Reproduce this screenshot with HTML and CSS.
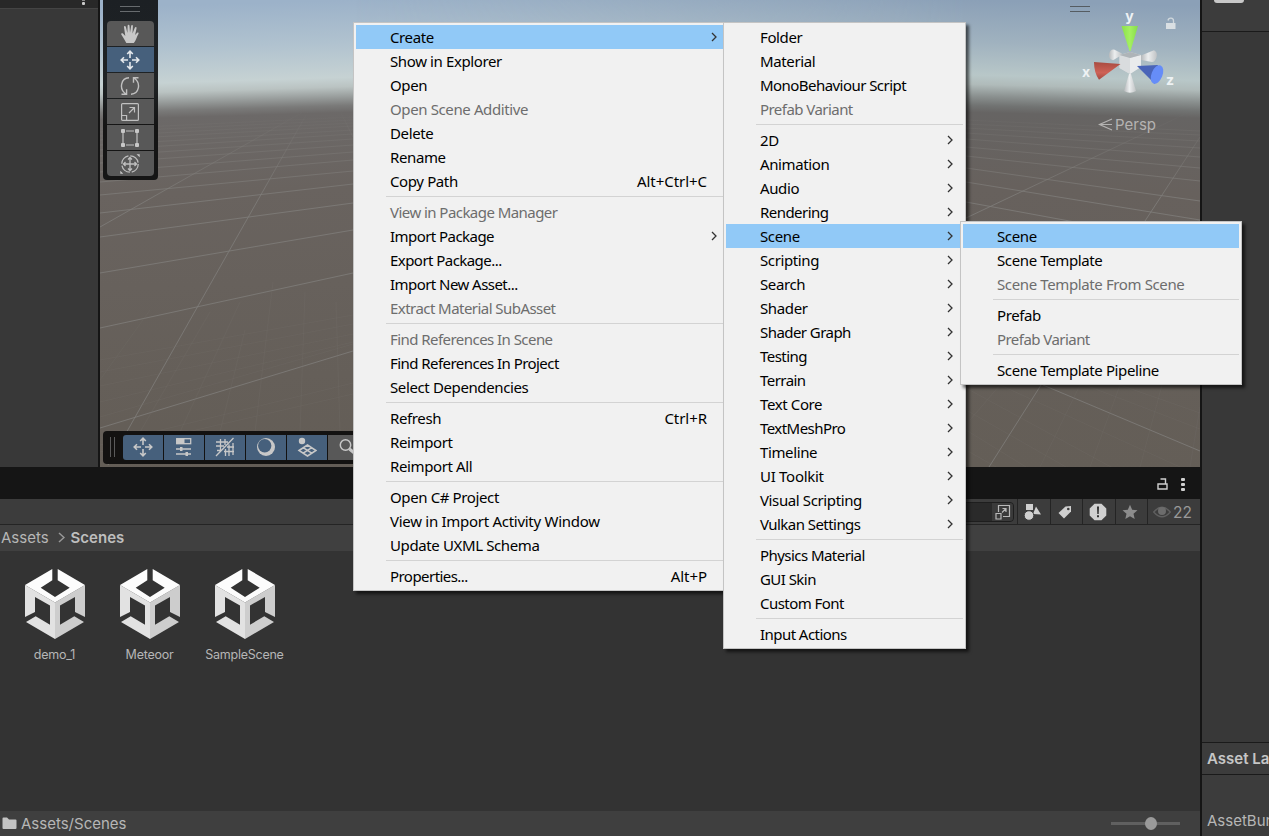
FILE: index.html
```html
<!DOCTYPE html>
<html lang="en">
<head>
<meta charset="utf-8">
<title>Unity Editor</title>
<link rel="stylesheet" href="styles.css">
</head>
<body>
<svg class="defs" width="0" height="0">
  <defs>
    <symbol id="chev" viewBox="0 0 6 10"><path d="M1 1l4 4-4 4" fill="none" stroke="#333" stroke-width="1.3"/></symbol>
    <symbol id="move" viewBox="0 0 20 20"><path d="M10 8V1.5M7.2 4 10 1.2 12.8 4M10 12v6.500M7.200 16l2.800 2.800L12.800 16M8 10H1.500M4 7.200 1.200 10 4 12.800M12 10h6.500M16 7.200 18.800 10 16 12.800" fill="none" stroke="currentColor" stroke-width="1.6"/></symbol>
    <symbol id="unity" viewBox="0 0 60 70">
      <path fill="#e2e2e2" d="M0 16 30 33.500V70L1 53l9.700-5.700L25 55.700V36.500L10 28v15L0 48z"/>
      <path fill="#cdcdcd" d="M60 16 30 33.500V70l29-17-9.700-5.700L35 55.700V36.500L50 28v15l10 5z"/>
      <path fill="#fcfcfc" d="M27.300 0v11.300L15.700 18.700 30 28l14.700-9.300-12-7.400V0L60 16 30 33.500 0 16z"/>
    </symbol>
  </defs>
</svg>
<div class="editor">
  <div class="main">
    <div class="upper">
      <aside class="hierarchy"><div class="hierarchy-tab"><i></i><i></i></div></aside>
      <section class="scene">
        <svg class="world" viewBox="100 0 1100 467" preserveAspectRatio="none">
          <defs>
            <linearGradient id="skyL" gradientUnits="userSpaceOnUse" x1="353" y1="0" x2="367" y2="467">
              <stop offset="0" stop-color="#9cb2c9"/><stop offset=".09" stop-color="#b0c2cf"/><stop offset=".165" stop-color="#c6d2d3"/><stop offset=".185" stop-color="#bac3c2"/><stop offset=".205" stop-color="#9a9f9e"/><stop offset=".225" stop-color="#7a7a79"/><stop offset=".24" stop-color="#6c6968"/><stop offset=".4" stop-color="#69635f"/><stop offset="1" stop-color="#635d56"/>
            </linearGradient>
            <linearGradient id="skyR" gradientUnits="userSpaceOnUse" x1="966" y1="0" x2="954" y2="467">
              <stop offset="0" stop-color="#8ba0b7"/><stop offset=".09" stop-color="#a0b2bf"/><stop offset=".16" stop-color="#b8c7c8"/><stop offset=".18" stop-color="#b0bbba"/><stop offset=".205" stop-color="#8b9190"/><stop offset=".225" stop-color="#717372"/><stop offset=".24" stop-color="#666463"/><stop offset=".4" stop-color="#67615d"/><stop offset="1" stop-color="#645e57"/>
            </linearGradient>
            <linearGradient id="blend" gradientUnits="userSpaceOnUse" x1="353" y1="0" x2="966" y2="0"><stop offset="0" stop-color="#000"/><stop offset="1" stop-color="#fff"/></linearGradient>
            <mask id="right" maskUnits="userSpaceOnUse" x="100" y="0" width="1100" height="467"><rect x="100" width="1100" height="467" fill="url(#blend)"/></mask>
            <linearGradient id="fade" gradientUnits="userSpaceOnUse" x1="0" y1="110" x2="0" y2="200"><stop offset="0" stop-color="#7f7d7a" stop-opacity="0"/><stop offset=".5" stop-color="#7f7d7a" stop-opacity=".45"/><stop offset="1" stop-color="#7f7d7a" stop-opacity=".8"/></linearGradient>
          </defs>
          <rect x="100" width="1100" height="467" fill="url(#skyL)"/>
          <rect x="353" width="847" height="467" fill="url(#skyR)" mask="url(#right)"/>
          <g fill="none" stroke="url(#fade)">
            <path d="M100 428 353 351M100 328l253-55M100 273l253-43M100 237l253-34M100 213l253-29M100 195l253-24M100 182l253-22M100 172l253-20M100 163l253-18M100 156l253-17M100 150l253-16M100 145l253-15M100 140l253-14M100 136l253-13M100 132l253-12M100 129l253-12"/>
            <path d="M310 108 100 227M310 108 108 465M332 95 353 137"/>
            <path d="M966 202l234 43M966 182l234 38M966 168l234 33M966 156l234 25M966 147l234 21M966 139l234 18M966 133l234 15M966 128l234 13M966 124l234 11M966 120l234 11"/>
            <path d="M966 218 1200 107M1145 221l55-84M989 467l52-82M1043 385l157 66"/>
          </g>
          <g fill="none" stroke="#77736f" stroke-opacity=".22">
            <path d="M100 360l253-45M100 372l253-48M100 386l253-52M100 402l253-60M100 417l253-73M100 445l253-62M100 452l253-58M220 432 245 330M255 432l18-150M300 432l5-140M340 432l-4-130M180 432l60-130M140 432l70-120M100 380l50-70"/>
            <path d="M966 388l145 79M966 410l100 57M970 420l30-35M1040 467l40-82M1090 467l30-82M1140 467l22-82M1190 467l10-60M1085 385l115 44M1120 385l80 28M966 430l60 37M1000 385l180 82M966 450l30 17"/>
          </g>
        </svg>
        <div class="tools">
          <div class="grip"></div>
          <div class="tool"><svg width="20" height="20" viewBox="0 0 20 20"><path d="M6.300 19C4.500 15.500 2.600 12.500 1.300 10.500.8 9.300 2.300 8.700 3.200 9.700L5.300 12 4 3.200C3.900 1.800 5.500 1.600 5.900 3L7.400 9 7.600 1.700C7.700.4 9.400.4 9.500 1.700L10 8.800l1.200-7C11.500.6 13 .9 12.900 2.200l-.4 7.300 2.300-5.700c.6-1.300 2-.7 1.700.6L15.100 11l1.800-2c1-1 2.200-.2 1.500 1-1.500 2.500-2.400 6.500-4.600 9z" fill="#c8c8c8"/></svg></div>
          <div class="tool on"><svg width="20" height="20"><use href="#move"/></svg></div>
          <div class="tool"><svg width="20" height="20" viewBox="0 0 20 20" fill="none" stroke="#c0c0c0" stroke-width="1.400"><path d="M9 1.800C1 2 -1.500 13 6 18M1.500 18.300H6.600V13.300M11 18.200C19 18 21.500 7 14 2M18.500 1.700h-5v5"/></svg></div>
          <div class="tool"><svg width="20" height="20" viewBox="0 0 20 20" fill="none" stroke="#c0c0c0" stroke-width="1.200"><rect x="1.600" y="1.600" width="16.800" height="16.800" rx="1"/><path d="M1.600 13.500h5v5M9 11l5.500-5.500M9.500 5.500h5v5"/></svg></div>
          <div class="tool"><svg width="20" height="20" viewBox="0 0 20 20"><path d="M3 5v10M17 5v10M6 3h8M6 17h8" stroke="#c0c0c0" stroke-width="1.200"/><g fill="#c8c8c8"><rect x="1" y="1" width="4" height="4" rx="1"/><rect x="15" y="1" width="4" height="4" rx="1"/><rect x="1" y="15" width="4" height="4" rx="1"/><rect x="15" y="15" width="4" height="4" rx="1"/></g></svg></div>
          <div class="tool"><svg width="20" height="20" viewBox="0 0 20 20" fill="none" stroke="#c0c0c0" stroke-width="1.300"><circle cx="10" cy="10" r="8.200" stroke-dasharray="11 1.900"/><path d="M10 3.500v13M3.500 10h13M8 5.500l2-2 2 2M8 14.500l2 2 2-2M5.500 8l-2 2 2 2M14.500 8l2 2-2 2"/><path d="M16.500.3h3.200v3zM.3 16.700v3h3z" fill="#c8c8c8" stroke="none"/></svg></div>
        </div>
        <div class="overlay-bar">
          <div class="vgrip"></div>
          <div class="btn"><svg width="20" height="20"><use href="#move"/></svg></div>
          <div class="btn"><svg width="20" height="20" viewBox="0 0 20 20" fill="none" stroke="#c8c8c8" stroke-width="1.300"><rect x="2.700" y="1.700" width="14" height="5"/><path fill="#c8c8c8" stroke="none" d="M2.500 1.500h8v5.500h-8z"/><path d="M2 12h15M2 17h15"/><path stroke-width="4" d="M6 12h2.500M11.500 17H14"/></svg></div>
          <div class="btn"><svg width="20" height="20" viewBox="0 0 20 20" fill="none" stroke="#c8c8c8" stroke-width="1.300"><path d="M1 19 18.500 1M5.500 2v12M10 2v6M1 5h12M1 9h8M2 13.500h3M10.500 12v7M14 7.500V19M18 6v12M12 10h7M9 14.500h10"/></svg></div>
          <div class="btn"><svg width="20" height="20" viewBox="0 0 20 20"><circle cx="10" cy="10" r="9" fill="#c8c8c8"/><circle cx="8.700" cy="8.700" r="6.700" fill="#46607c"/></svg></div>
          <div class="btn"><svg width="20" height="20" viewBox="0 0 20 20" fill="none" stroke="#c8c8c8" stroke-width="1.500"><circle cx="5" cy="4" r="3.200" fill="#c8c8c8" stroke="none"/><path d="M2 13.500 10.500 8l8.500 5.500-8.500 5.500zM6.200 16.200l8.500-5.500M6.200 10.700l8.500 5.500"/></svg></div>
          <div class="btn gray"><svg width="20" height="20" viewBox="0 0 20 20" fill="none" stroke="#c8c8c8" stroke-width="1.500"><circle cx="7.500" cy="8" r="5.200"/><path d="M11.500 12l6 5" stroke-width="3"/></svg></div>
        </div>
        <div class="scene-grip"></div>
        <svg class="gizmo" viewBox="1075 5 110 130" width="110" height="130">
          <defs>
            <linearGradient id="gg"><stop offset="0" stop-color="#8be04a"/><stop offset=".5" stop-color="#a4f060"/><stop offset="1" stop-color="#86dc4c"/></linearGradient>
            <linearGradient id="gw"><stop offset="0" stop-color="#b5b8ba"/><stop offset=".45" stop-color="#eceeef"/><stop offset="1" stop-color="#c0c3c5"/></linearGradient>
            <linearGradient id="gr" x2="0" y2="1"><stop offset="0" stop-color="#a94b40"/><stop offset=".6" stop-color="#ce6257"/><stop offset="1" stop-color="#a3483f"/></linearGradient>
          </defs>
          <path d="M1121 55.500 1113 60.200q-5-1.500-4-6 1-5 5-4.700l8 4z" fill="url(#gw)"/>
          <path d="M1141 55.500 1154 50.200q4 2 2.500 7-1.500 5-4.500 4.800l-11-2z" fill="url(#gw)"/>
          <path d="M1119.500 55 1130 52l11 3v11l-11 8-10.500-6z" fill="#d4d7d9"/>
          <path d="M1119.500 55 1130 58v16l-10.500-6z" fill="#d9dcde"/><path d="M1130 58 1141 55v12l-11 7z" fill="#e9ebec"/><path d="M1119.500 55 1130 52l11 3-11 3z" fill="#aeb4b8"/>
          <path d="M1121.500 26H1138L1130.500 51h-1z" fill="url(#gg)"/>
          <path d="M1129 74h2l5 17q-6 3.500-12 0z" fill="url(#gw)"/>
          <path d="M1094 62 1120.500 64 1099 79.700q-5-7-5-17.700z" fill="url(#gr)"/>
          <path d="M1137 66 1158 65l-3 19z" fill="#4964b8"/><ellipse cx="1157" cy="74.500" rx="5.500" ry="9.800" transform="rotate(22 1157 74.500)" fill="#668df8"/>
          <g class="axis"><text x="1125.300" y="21">y</text><text x="1082" y="77">x</text><text x="1166" y="84.500">z</text></g>
          <path d="M1166 23h9.500v6H1166z" fill="#d9dfe3"/><path d="M1168 20.500q.5-2.500 3-2.300 2.500.2 2.500 2.500V23" fill="none" stroke="#d0d8dd" stroke-width="1.300"/>
          <path d="M1112 119l-12.500 5.500L1112 130M1099.500 124.500H1112" fill="none" stroke="#b5b3b2" stroke-width="1.200"/>
          <text class="persp" x="1115" y="130">Persp</text>
        </svg>
      </section>
    </div>
    <section class="project">
      <div class="tabs">
        <svg width="11" height="14" viewBox="0 0 11 14" fill="none" stroke="#d0d0d0" stroke-width="1.400"><path d="M1 7h9v5H1zM3.500 2h5v5"/></svg>
        <div class="kebab"><i></i><i></i><i></i></div>
      </div>
      <div class="toolbar">
        <div class="search"><span><svg width="16" height="16" viewBox="0 0 16 16" fill="none" stroke="#b8b8b8" stroke-width="1.200"><path d="M3.500 8V1.500h11v11H8M1 9.500h5V15H1zM7 8.500l4-4M7.500 4.500H11V8"/></svg></span></div>
        <div class="cell w33"><svg width="18" height="18" viewBox="0 0 18 18" fill="#d0d0d0"><path d="M2 1h7v6H2zM9 11l3-7.500L17 11.500z"/><circle cx="5" cy="12.500" r="4.800" stroke="#3c3c3c"/></svg></div>
        <div class="cell w32"><svg width="16" height="16" viewBox="0 0 16 16"><path d="M8.500 2.500 14 2v5.500L7 14.500 1.500 9z" fill="#d0d0d0"/><circle cx="11.300" cy="5" r="1.300" fill="#3c3c3c"/></svg></div>
        <div class="cell w33"><svg width="18" height="18" viewBox="0 0 18 18"><path d="M5.500.7h7l4.800 4.800v7l-4.800 4.800h-7L.7 12.500v-7z" fill="#d0d0d0"/><path d="M8 3.500h2L9.700 11H8.300zM8 12.200h2v2H8z" fill="#303030"/></svg></div>
        <div class="cell w32"><svg width="16" height="16" viewBox="0 0 16 16"><path d="M8 .8 10.200 5.800 15.500 6.300 11.500 9.800 12.700 15 8 12.300 3.300 15l1.200-5.200-4-3.500 5.300-.5z" fill="#8c8c8c"/></svg></div>
        <div class="cell w53"><svg width="18" height="12" viewBox="0 0 18 12"><path d="M.7 6Q9-3.500 17.300 6 9 15.500.7 6z" fill="none" stroke="#606060" stroke-width="1.300"/><circle cx="9" cy="5" r="4" fill="#6c6c6c"/></svg><b>22</b></div>
      </div>
      <div class="crumbs"><span>Assets</span><svg width="7" height="11" viewBox="0 0 7 11"><path d="M1 1l5 4.500L1 10" fill="none" stroke="#999" stroke-width="1.500"/></svg><strong>Scenes</strong></div>
      <div class="assets">
        <div class="asset"><svg width="60" height="70"><use href="#unity"/></svg><span>demo_1</span></div>
        <div class="asset"><svg width="60" height="70"><use href="#unity"/></svg><span>Meteoor</span></div>
        <div class="asset"><svg width="60" height="70"><use href="#unity"/></svg><span>SampleScene</span></div>
      </div>
      <div class="status"><svg width="15" height="13" viewBox="0 0 15 13"><path d="M1.500.5H5L7 2.500h6.500q1 0 1 1V11q0 1-1 1h-12q-1 0-1-1V1.500q0-1 1-1z" fill="#c4c4c4"/></svg><span>Assets/Scenes</span><div class="slider"><i></i></div></div>
    </section>
  </div>
  <aside class="inspector">
    <div class="insp-head"><i></i></div>
    <div class="insp-body"></div>
    <div class="insp-title">Asset La</div>
    <div class="insp-foot">AssetBun</div>
  </aside>
</div>

<div class="menu menu-assets">
  <div class="item hot"><span>Create</span><svg><use href="#chev"/></svg></div>
  <div class="item"><span>Show in Explorer</span></div>
  <div class="item"><span>Open</span></div>
  <div class="item off"><span>Open Scene Additive</span></div>
  <div class="item"><span>Delete</span></div>
  <div class="item"><span>Rename</span></div>
  <div class="item"><span>Copy Path</span><kbd>Alt+Ctrl+C</kbd></div>
  <hr>
  <div class="item off tight"><span>View in Package Manager</span></div>
  <div class="item tight"><span>Import Package</span><svg><use href="#chev"/></svg></div>
  <div class="item tight"><span>Export Package...</span></div>
  <div class="item tight"><span>Import New Asset...</span></div>
  <div class="item off tight"><span>Extract Material SubAsset</span></div>
  <hr>
  <div class="item off tight"><span>Find References In Scene</span></div>
  <div class="item tight"><span>Find References In Project</span></div>
  <div class="item"><span>Select Dependencies</span></div>
  <hr>
  <div class="item"><span>Refresh</span><kbd>Ctrl+R</kbd></div>
  <div class="item"><span>Reimport</span></div>
  <div class="item"><span>Reimport All</span></div>
  <hr>
  <div class="item"><span>Open C# Project</span></div>
  <div class="item loose"><span>View in Import Activity Window</span></div>
  <div class="item"><span>Update UXML Schema</span></div>
  <hr>
  <div class="item tight"><span>Properties...</span><kbd>Alt+P</kbd></div>
</div>

<div class="menu menu-create">
  <div class="item"><span>Folder</span></div>
  <div class="item"><span>Material</span></div>
  <div class="item tight"><span>MonoBehaviour Script</span></div>
  <div class="item off tight"><span>Prefab Variant</span></div>
  <hr>
  <div class="item"><span>2D</span><svg><use href="#chev"/></svg></div>
  <div class="item"><span>Animation</span><svg><use href="#chev"/></svg></div>
  <div class="item"><span>Audio</span><svg><use href="#chev"/></svg></div>
  <div class="item tight"><span>Rendering</span><svg><use href="#chev"/></svg></div>
  <div class="item hot"><span>Scene</span><svg><use href="#chev"/></svg></div>
  <div class="item"><span>Scripting</span><svg><use href="#chev"/></svg></div>
  <div class="item"><span>Search</span><svg><use href="#chev"/></svg></div>
  <div class="item"><span>Shader</span><svg><use href="#chev"/></svg></div>
  <div class="item tight"><span>Shader Graph</span><svg><use href="#chev"/></svg></div>
  <div class="item tight"><span>Testing</span><svg><use href="#chev"/></svg></div>
  <div class="item tight"><span>Terrain</span><svg><use href="#chev"/></svg></div>
  <div class="item"><span>Text Core</span><svg><use href="#chev"/></svg></div>
  <div class="item tight"><span>TextMeshPro</span><svg><use href="#chev"/></svg></div>
  <div class="item"><span>Timeline</span><svg><use href="#chev"/></svg></div>
  <div class="item loose"><span>UI Toolkit</span><svg><use href="#chev"/></svg></div>
  <div class="item"><span>Visual Scripting</span><svg><use href="#chev"/></svg></div>
  <div class="item tight"><span>Vulkan Settings</span><svg><use href="#chev"/></svg></div>
  <hr>
  <div class="item tight"><span>Physics Material</span></div>
  <div class="item tight"><span>GUI Skin</span></div>
  <div class="item tight"><span>Custom Font</span></div>
  <hr>
  <div class="item tight"><span>Input Actions</span></div>
</div>

<div class="menu menu-scene">
  <div class="item hot"><span>Scene</span></div>
  <div class="item"><span>Scene Template</span></div>
  <div class="item off"><span>Scene Template From Scene</span></div>
  <hr>
  <div class="item"><span>Prefab</span></div>
  <div class="item off tight"><span>Prefab Variant</span></div>
  <hr>
  <div class="item"><span>Scene Template Pipeline</span></div>
</div>
</body>
</html>
```
FILE: styles.css
```css
* { box-sizing: border-box; }
body { margin: 0; width: 1269px; height: 836px; overflow: hidden; position: relative; background: #151515; font-family: Inter, "Liberation Sans", sans-serif; font-size: 15px; color: #b6b6b6; }
svg { display: block; flex: none; }
.defs { position: absolute; }
.editor { display: grid; grid-template-columns: 1200px 1fr; gap: 2px; height: 836px; }
.main { display: flex; flex-direction: column; }
.upper { display: grid; grid-template-columns: 98px 1100px; gap: 2px; height: 467px; }
.hierarchy { background: #383838; }
.hierarchy-tab { height: 9px; background: #282828; border-bottom: 1px solid #444; display: flex; flex-direction: column; align-items: flex-end; gap: 1px; padding-right: 13px; }
.hierarchy-tab i { width: 3px; height: 1px; background: #888; }
.hierarchy-tab i + i { height: 3px; border-radius: 1px; background: #ccc; }
.scene { position: relative; overflow: hidden; }
.world { width: 1100px; height: 467px; }
.tools { position: absolute; left: 3px; top: 0; width: 55px; height: 180px; background: linear-gradient(#1c2024, #1f2325 45%, #151515 70%); border-radius: 0 0 4px 4px; padding: 6px 4px 0; display: flex; flex-direction: column; gap: 1px; }
.grip, .scene-grip { width: 20px; height: 6px; border-top: 1px solid #676b6e; border-bottom: 1px solid #676b6e; }
.grip { margin: 0 0 8px 13px; }
.tool { height: 25px; background: #585858; display: flex; align-items: center; justify-content: center; color: #e4e8ec; padding-right: 1px; }
.tool:nth-child(2) { border-radius: 4px 4px 0 0; }
.tool:last-child { border-radius: 0 0 4px 4px; }
.tool.on { background: #46607c; }
.overlay-bar { position: absolute; left: 3px; top: 431px; width: 300px; height: 33px; background: #131211; border-radius: 4px; padding: 4px 7px; display: flex; gap: 1px; }
.vgrip { width: 5px; height: 20px; margin: 2px 7px 0 0; border-left: 1px solid #5a5a5a; border-right: 1px solid #5a5a5a; }
.btn { width: 40px; height: 25px; padding-bottom: 1px; background: #46607c; color: #c8c8c8; display: flex; align-items: center; justify-content: center; }
.btn:nth-child(2) { border-radius: 3px 0 0 3px; }
.btn.gray { background: #585858; }
.scene-grip { position: absolute; left: 970px; top: 6px; border-color: #555c62; }
.gizmo { position: absolute; left: 975px; top: 5px; }
.axis { fill: #eef2f4; font-size: 14px; font-weight: 700; }
.persp { fill: #b5b3b2; font-size: 15px; }

.project { flex: 1; display: flex; flex-direction: column; background: #333; }
.tabs { height: 32px; background: #151515; display: flex; justify-content: flex-end; align-items: center; gap: 13px; padding: 2px 15px 0 0; }
.kebab { display: flex; flex-direction: column; gap: 2px; }
.kebab i { width: 4px; height: 3px; border-radius: 1px; background: #d0d0d0; }
.toolbar { height: 26px; background: #3c3c3c; border-bottom: 1px solid #242424; display: flex; justify-content: flex-end; }
.search { width: 300px; height: 20px; margin: 3px 3px 0 0; background: #2a2a2a; border: 1px solid #1e1e1e; border-radius: 4px; display: flex; justify-content: flex-end; }
.search span { width: 21px; background: #3a3a3a; padding: 1px 2px 1px 3px; border-radius: 0 3px 3px 0; }
.cell { border-left: 1px solid #242424; display: flex; align-items: center; justify-content: center; height: 25px; padding-right: 3px; }
.w32 { width: 32px; }
.w33 { width: 33px; }
.w53 { width: 53px; gap: 2px; }
.cell b { font-weight: 400; font-size: 15.500px; color: #999; padding-top: 1px; }
.crumbs { height: 26px; background: #404040; display: flex; align-items: center; padding: 0 0 2px 1px; }
.crumbs svg { margin: 0 6px 0 9px; }
.crumbs strong { font-weight: 600; color: #bebebe; }
.assets { flex: 1; display: flex; padding: 18px 0 0 7px; font-size: 12.500px; letter-spacing: -.25px; }
.asset { width: 95px; display: flex; flex-direction: column; align-items: center; gap: 8px; }
.status { height: 25px; background: #3f3f3f; display: flex; align-items: center; padding: 0 20px 0 2px; gap: 4px; }
.slider { width: 69px; height: 3px; background: #606060; margin-left: auto; display: flex; align-items: center; padding-left: 34px; }
.slider i { width: 12px; height: 13px; border-radius: 50%; background: #9a9a9a; }

.inspector { display: flex; flex-direction: column; background: #3c3c3c; overflow: hidden; white-space: nowrap; }
.insp-head { height: 32px; border-bottom: 1px solid #1a1a1a; padding-left: 12px; }
.insp-head i { display: block; width: 30px; height: 3px; background: #c8c8c8; border-radius: 0 0 3px 3px; }
.insp-body { flex: 1; background: #383838; }
.insp-title { height: 33px; line-height: 31px; border: solid #1a1a1a; border-width: 1px 0; font-weight: 600; color: #c6c6c6; padding-left: 5px; }
.insp-foot { height: 61px; padding: 37px 0 0 5px; line-height: 18px; }

.menu { position: absolute; background: #f1f1f1; border: 1px solid #c4c4c4; padding: 2px; box-shadow: 3px 3px 3px rgba(0, 0, 0, .6); font: 15px "Noto Sans", "Open Sans", sans-serif; letter-spacing: -.38px; color: #000; }
.menu-assets { left: 353px; top: 22px; width: 374px; }
.menu-create { left: 723px; top: 22px; width: 243px; }
.menu-scene { left: 960px; top: 221px; width: 282px; }
.item { height: 24px; display: flex; align-items: center; justify-content: space-between; padding: 0 13px 0 34px; line-height: 24px; white-space: nowrap; }
.menu-assets .item { padding-right: 17px; }
.menu-create .item { padding-right: 10px; }
.item svg { width: 6px; height: 10px; margin-top: -1px; }
.menu-assets .item svg { margin-right: -10px; }
.item kbd { font: inherit; letter-spacing: -.05px; }
.tight { letter-spacing: -.55px; }
.loose { letter-spacing: -.28px; }
.hot { background: #91c9f7; }
.off { color: #6d6d6d; }
.menu hr { height: 1px; border: 0; margin: 3px 0 3px 30px; background: #d3d3d3; }
```
